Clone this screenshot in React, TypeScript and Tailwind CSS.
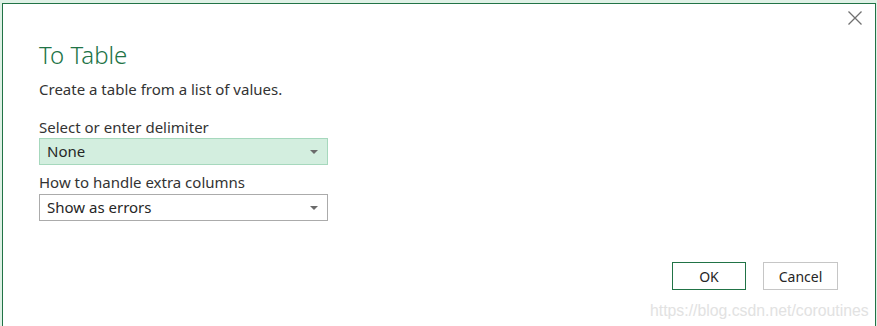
function Select({ value, active }: { value: string; active?: boolean }) {
  return (
    <div
      className={
        "flex h-[27px] w-[289px] items-center justify-between border pl-[7px] pr-[9px] " +
        (active ? "border-[#a6d8bd] bg-[#d3eedf]" : "border-[#ababab] bg-white")
      }
    >
      <span className="text-[15px] text-[#262626]">{value}</span>
      <svg width="8" height="4" viewBox="0 0 8 4">
        <path d="M0 0h8L4 4z" fill="#6b6b6b" />
      </svg>
    </div>
  )
}

export default function App() {
  return (
    <div className="h-[326px] w-[877px] overflow-hidden bg-[#dff1e6] pl-[2px] pr-[1px] pt-[3px] font-['Segoe_UI','Noto_Sans',sans-serif]">
      <div className="relative flex h-[340px] flex-col border border-[#217346] bg-white pl-[36px]">
        <button className="absolute right-[12px] top-[6px] text-[#6d6d6d]">
          <svg width="16" height="16" viewBox="0 0 16 16">
            <path d="M1.5 1.5l13 13M14.5 1.5l-13 13" stroke="#707070" strokeWidth="1.3" />
          </svg>
        </button>

        <h1 className="mt-[35px] text-[24px] font-light leading-[32px] text-[#217346]">To Table</h1>
        <p className="mt-[8px] text-[15px] leading-[20px] text-[#333]">Create a table from a list of values.</p>

        <p className="mt-[18px] text-[15px] leading-[20px] text-[#333]">Select or enter delimiter</p>
        <div className="mt-[1px]">
          <Select value="None" active />
        </div>

        <p className="mt-[7px] text-[15px] leading-[20px] text-[#333]">How to handle extra columns</p>
        <div className="mt-[2px]">
          <Select value="Show as errors" />
        </div>

        <div className="mt-[41px] flex justify-end gap-[17px] pr-[37px]">
          <button className="h-[28px] w-[74px] border border-[#217346] text-[14px] text-[#262626]">OK</button>
          <button className="h-[28px] w-[75px] border border-[#c6c6c6] text-[14px] text-[#262626]">Cancel</button>
        </div>

        <div className="absolute left-[647px] top-[295px] whitespace-nowrap font-['Liberation_Sans',sans-serif] text-[15.8px] text-[#e2e2e2]">
          https://blog.csdn.net/coroutines
        </div>
      </div>
    </div>
  )
}
